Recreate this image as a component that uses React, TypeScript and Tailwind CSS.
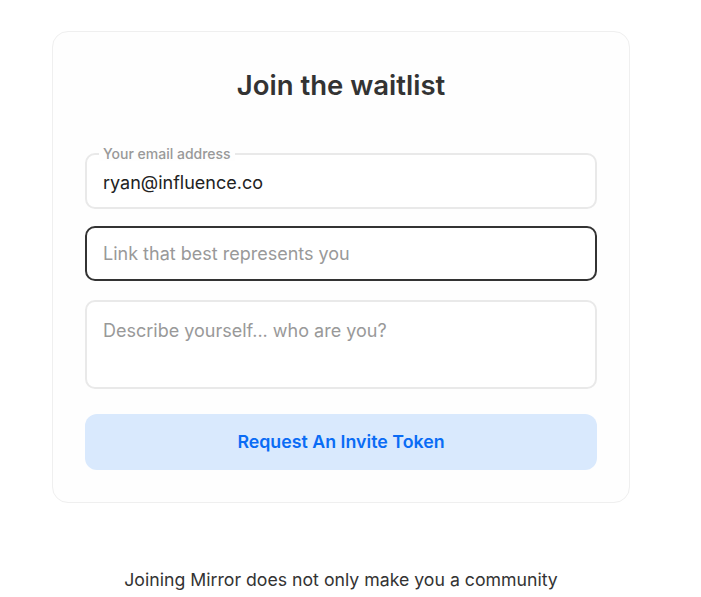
import * as React from "react";

// ─── Main Component ───────────────────────────────────────────────────────────

export default function App() {
  return (
    <div
      className="min-h-[597px] w-[701px] bg-white text-[#333]"
      style={{ fontFamily: "Inter, 'Noto Sans', sans-serif" }}
    >
      <div className="ml-[52px] w-[578px] pt-[31px]">
        {/* ── Card ── */}
        <div className="rounded-[16px] border border-[#efefef] bg-[#fefefe] px-[32px] pb-[32px] pt-[37px]">
          <h1 className="text-center text-[27.5px] font-semibold leading-[32px] text-[#333]">
            Join the waitlist
          </h1>

          <div className="mt-[52px] flex flex-col">
            {/* email */}
            <div className="relative flex h-[56px] items-center rounded-[10px] border-2 border-[#e9e9e9] bg-white px-[16px] pt-[2px] text-[18px] text-[#222]">
              <span className="absolute -top-[8px] left-[12px] bg-[#fefefe] px-[4px] text-[14px] font-medium leading-[14px] text-[#999]">
                Your email address
              </span>
              ryan@influence.co
            </div>

            {/* link */}
            <div className="mt-[17px] flex h-[55px] items-center rounded-[10px] border-2 border-[#333] bg-white px-[16px] text-[18px] text-[#999]">
              Link that best represents you
            </div>

            {/* textarea */}
            <div className="mt-[19px] h-[89px] rounded-[10px] border-2 border-[#e9e9e9] bg-white px-[16px] pt-[18px] text-[18px] leading-[22px] text-[#999]">
              Describe yourself... who are you?
            </div>

            {/* button */}
            <button className="mt-[25px] h-[56px] w-full rounded-[12px] bg-[#d9e9fd] text-[17.8px] font-semibold text-[#0a6cf5]">
              Request An Invite Token
            </button>
          </div>
        </div>

        {/* ── Footer text ── */}
        <p className="mt-[66px] text-center text-[17.7px] leading-[22px] text-[#333]">
          Joining Mirror does not only make you a community
        </p>
      </div>
    </div>
  );
}
